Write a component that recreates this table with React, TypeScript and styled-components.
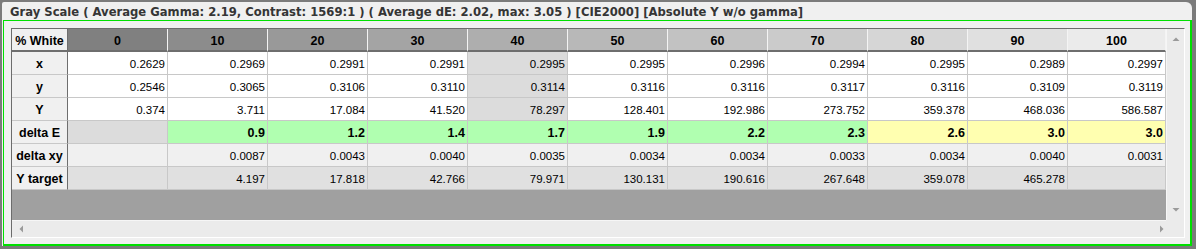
import styled, { createGlobalStyle } from "styled-components";

const GlobalStyle = createGlobalStyle`
  html, body {
    margin: 0;
    padding: 0;
    background: #7b7b7b;
    font-family: "Liberation Sans", Arial, sans-serif;
  }
`;

const Window = styled.div`
  margin: 2px 4px 0 2px;
  height: 244px;
  background: #f0f0f0;
  border-radius: 2px 6px 0 0;
  display: flex;
  flex-direction: column;
  box-sizing: border-box;
`;

const Title = styled.div`
  height: 18px;
  box-sizing: border-box;
  padding: 2px 0 0 8px;
  line-height: 16px;
  font-family: "DejaVu Sans", Verdana, sans-serif;
  font-size: 11.6px;
  font-weight: bold;
  color: #353535;
  white-space: nowrap;
`;

const Frame = styled.div`
  flex: 1;
  margin-left: 1px;
  border-style: solid;
  border-color: #00e000;
  border-width: 1px 2px 2px 1px;
  padding: 7px 5px 6px 7px;
  display: flex;
  min-height: 0;
`;

const TableFrame = styled.div`
  flex: 1;
  border-style: solid;
  border-width: 1px;
  border-color: #6c6c6c #ffffff #ffffff #6c6c6c;
  display: grid;
  grid-template-columns: 1154px 18px;
  grid-template-rows: 191px 17px;
`;

const TableArea = styled.div`
  background: #a0a0a0;
  overflow: hidden;
`;

const Grid = styled.div`
  display: grid;
  grid-template-columns: 56px repeat(10, 100px) 98px;
  grid-auto-rows: 23px;
`;

const HeadCell = styled.div<{ $bg: string; $corner?: boolean }>`
  box-sizing: border-box;
  background: ${(p) => p.$bg};
  border-bottom: 2px solid #6e6e6e;
  border-right: 1px solid ${(p) => (p.$corner ? "#6e6e6e" : "#f4f4f4")};
  font-size: 12.5px;
  font-weight: bold;
  color: #000;
  display: flex;
  align-items: center;
  justify-content: center;
  padding-top: 3px;
  white-space: nowrap;
`;

const RowHead = styled.div`
  box-sizing: border-box;
  background: #f0f0f0;
  border-right: 1px solid #6e6e6e;
  border-bottom: 1px solid #c8c8c8;
  font-size: 12.5px;
  font-weight: bold;
  color: #000;
  display: flex;
  align-items: center;
  justify-content: center;
  padding-top: 2px;
  white-space: nowrap;
`;

const Cell = styled.div<{ $bg: string; $bold?: boolean }>`
  box-sizing: border-box;
  background: ${(p) => p.$bg};
  border-right: 1px solid #c8c8c8;
  border-bottom: 1px solid #c8c8c8;
  font-size: ${(p) => (p.$bold ? "12.5px" : "11.5px")};
  font-weight: ${(p) => (p.$bold ? "bold" : "normal")};
  color: #000;
  display: flex;
  align-items: center;
  justify-content: flex-end;
  padding: 2px 2px 0 0;
  white-space: nowrap;
`;

const VScroll = styled.div`
  background: #ebebeb;
  border-left: 1px solid #f6f6f6;
  display: flex;
  flex-direction: column;
  justify-content: space-between;
  align-items: center;
  padding: 8px 0 8px;
`;

const HScroll = styled.div`
  background: #ebebeb;
  border-top: 1px solid #f6f6f6;
  display: flex;
  justify-content: space-between;
  align-items: center;
  padding: 0 0 0 7px;
`;

const Corner = styled.div`
  background: #ebebeb;
`;

const Arrow = styled.svg`
  display: block;
  fill: #9a9a9a;
`;

const UpArrow = () => (
  <Arrow width="8" height="5" viewBox="0 0 8 5">
    <path d="M4 0.5 L7.5 4 L0.5 4 Z" />
  </Arrow>
);
const DownArrow = () => (
  <Arrow width="8" height="5" viewBox="0 0 8 5">
    <path d="M0.5 1 L7.5 1 L4 4.5 Z" />
  </Arrow>
);
const LeftArrow = () => (
  <Arrow width="5" height="8" viewBox="0 0 5 8">
    <path d="M0.5 4 L4 0.5 L4 7.5 Z" />
  </Arrow>
);
const RightArrow = () => (
  <Arrow width="5" height="8" viewBox="0 0 5 8" style={{ marginRight: 2 }}>
    <path d="M1 0.5 L4.5 4 L1 7.5 Z" />
  </Arrow>
);

const levels = [0, 10, 20, 30, 40, 50, 60, 70, 80, 90, 100];
const headBg = ["#808080", "#8c8c8c", "#999999", "#a4a4a4", "#aeaeae", "#b8b8b8", "#c2c2c2", "#cbcbcb", "#d6d6d6", "#e0e0e0", "#ebebeb"];

const xs = ["0.2629", "0.2969", "0.2991", "0.2991", "0.2995", "0.2995", "0.2996", "0.2994", "0.2995", "0.2989", "0.2997"];
const ys = ["0.2546", "0.3065", "0.3106", "0.3110", "0.3114", "0.3116", "0.3116", "0.3117", "0.3116", "0.3109", "0.3119"];
const bigY = ["0.374", "3.711", "17.084", "41.520", "78.297", "128.401", "192.986", "273.752", "359.378", "468.036", "586.587"];
const dE = ["", "0.9", "1.2", "1.4", "1.7", "1.9", "2.2", "2.3", "2.6", "3.0", "3.0"];
const dxy = ["", "0.0087", "0.0043", "0.0040", "0.0035", "0.0034", "0.0034", "0.0033", "0.0034", "0.0040", "0.0031"];
const yTarget = ["", "4.197", "17.818", "42.766", "79.971", "130.131", "190.616", "267.648", "359.078", "465.278", ""];

const deColor = (v: string) => {
  if (!v) return "#dcdcdc";
  return parseFloat(v) < 2.5 ? "#b0ffb0" : "#ffffb0";
};

export default function App() {
  const plain = (i: number) => (i === 4 ? "#dcdcdc" : "#ffffff");
  return (
    <>
      <GlobalStyle />
      <Window>
        <Title>
          Gray Scale ( Average Gamma: 2.19, Contrast: 1569:1 ) ( Average dE: 2.02, max: 3.05 ) [CIE2000] [Absolute Y w/o gamma]
        </Title>
        <Frame>
          <TableFrame>
            <TableArea>
              <Grid>
                <HeadCell $bg="#f0f0f0" $corner>% White</HeadCell>
                {levels.map((l, i) => (
                  <HeadCell key={l} $bg={headBg[i]}>{l}</HeadCell>
                ))}

                <RowHead>x</RowHead>
                {xs.map((v, i) => (
                  <Cell key={"x" + i} $bg={plain(i)}>{v}</Cell>
                ))}

                <RowHead>y</RowHead>
                {ys.map((v, i) => (
                  <Cell key={"y" + i} $bg={plain(i)}>{v}</Cell>
                ))}

                <RowHead>Y</RowHead>
                {bigY.map((v, i) => (
                  <Cell key={"Y" + i} $bg={plain(i)}>{v}</Cell>
                ))}

                <RowHead>delta E</RowHead>
                {dE.map((v, i) => (
                  <Cell key={"e" + i} $bg={deColor(v)} $bold>{v}</Cell>
                ))}

                <RowHead>delta xy</RowHead>
                {dxy.map((v, i) => (
                  <Cell key={"d" + i} $bg="#f0f0f0">{v}</Cell>
                ))}

                <RowHead>Y target</RowHead>
                {yTarget.map((v, i) => (
                  <Cell key={"t" + i} $bg="#e0e0e0">{v}</Cell>
                ))}
              </Grid>
            </TableArea>
            <VScroll>
              <UpArrow />
              <DownArrow />
            </VScroll>
            <HScroll>
              <LeftArrow />
              <RightArrow />
            </HScroll>
            <Corner />
          </TableFrame>
        </Frame>
      </Window>
    </>
  );
}
